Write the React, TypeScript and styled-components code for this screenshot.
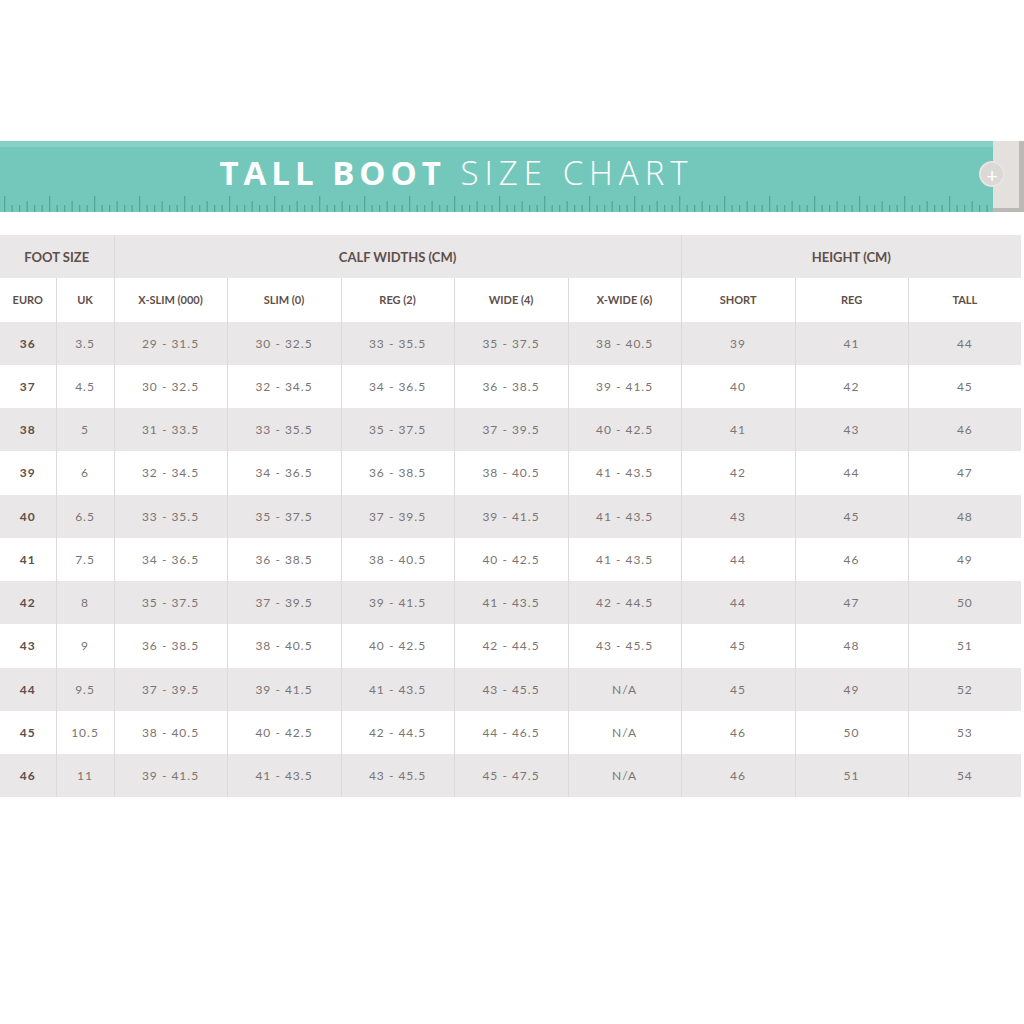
import React from "react";
import styled, { createGlobalStyle } from "styled-components";

const G = createGlobalStyle`
  body { margin: 0; background: #fff; font-family: "Lato", "Open Sans", sans-serif; }
`;
const Page = styled.div`
  width: 1024px; height: 1024px; padding-top: 141px; box-sizing: border-box;
`;
const Banner = styled.div`
  display: flex; height: 71px;
`;
const Strip = styled.div`
  position: relative; flex: 1; background: #74c8bb;
  border-top: 6px solid #86d1c5; box-sizing: border-box;
  display: flex; justify-content: center;
`;
const Title = styled.h1`
  margin: 3px 0 0 -80px; font-size: 33px; color: #fff; letter-spacing: 6px;
  font-weight: 300; font-family: "Open Sans", sans-serif;
  b { font-weight: 700; letter-spacing: 5px; }
`;
const Ticks = styled.svg`
  position: absolute; left: 0; bottom: 0;
`;
const Cap = styled.div`
  width: 26px; background: #e4e0de; border-right: 5px solid #bdb9b6;
  border-bottom: 4px solid #bdb9b6; position: relative;
`;
const Plus = styled.div`
  position: absolute; left: -14px; top: 20px; width: 26px; height: 26px; border-radius: 50%;
  background: #dcd8d6; color: #fff; font-size: 20px; line-height: 24px; text-align: center;
  border: 2px solid #e8e4e2; box-sizing: border-box;
`;
const Table = styled.table`
  margin-top: 23px; width: 1021px; border-collapse: collapse; table-layout: fixed;
  font-family: "Lato", sans-serif;
`;
const Row = styled.tr<{ $grey?: boolean }>`
  height: 43.25px; background: ${p => (p.$grey ? "#e9e7e7" : "#fff")};
`;
const Th = styled.th`
  font-size: 11px; font-weight: 700; color: #5e4f4a; border-left: 1px solid #dcdada;
  &:first-child { border-left: none; }
`;
const TopTh = styled(Th)`font-size: 13px;`;
const Td = styled.td<{ $b?: boolean }>`
  text-align: center; font-size: 12px; letter-spacing: 1px; color: ${p => (p.$b ? "#5e4f4a" : "#7a7574")};
  font-weight: ${p => (p.$b ? 700 : 400)}; border-left: 1px solid #dcdada;
  &:first-child { border-left: none; }
`;

const data = [
  ["36","3.5","29 - 31.5","30 - 32.5","33 - 35.5","35 - 37.5","38 - 40.5","39","41","44"],
  ["37","4.5","30 - 32.5","32 - 34.5","34 - 36.5","36 - 38.5","39 - 41.5","40","42","45"],
  ["38","5","31 - 33.5","33 - 35.5","35 - 37.5","37 - 39.5","40 - 42.5","41","43","46"],
  ["39","6","32 - 34.5","34 - 36.5","36 - 38.5","38 - 40.5","41 - 43.5","42","44","47"],
  ["40","6.5","33 - 35.5","35 - 37.5","37 - 39.5","39 - 41.5","41 - 43.5","43","45","48"],
  ["41","7.5","34 - 36.5","36 - 38.5","38 - 40.5","40 - 42.5","41 - 43.5","44","46","49"],
  ["42","8","35 - 37.5","37 - 39.5","39 - 41.5","41 - 43.5","42 - 44.5","44","47","50"],
  ["43","9","36 - 38.5","38 - 40.5","40 - 42.5","42 - 44.5","43 - 45.5","45","48","51"],
  ["44","9.5","37 - 39.5","39 - 41.5","41 - 43.5","43 - 45.5","N/A","45","49","52"],
  ["45","10.5","38 - 40.5","40 - 42.5","42 - 44.5","44 - 46.5","N/A","46","50","53"],
  ["46","11","39 - 41.5","41 - 43.5","43 - 45.5","45 - 47.5","N/A","46","51","54"],
];
const widths = [56, 58, 113, 114, 113, 114, 113, 114, 113, 113];
const heads = ["EURO","UK","X-SLIM (000)","SLIM (0)","REG (2)","WIDE (4)","X-WIDE (6)","SHORT","REG","TALL"];

export default function App() {
  const ticks = [];
  for (let i = 0; i < 132; i++) {
    const x = 4 + i * 7.5;
    const h = i % 6 === 0 ? 16 : i % 3 === 0 ? 11 : 7;
    ticks.push(<rect key={i} x={x} y={18 - h} width={1.3} height={h} fill="#4fa89a" />);
  }
  return (
    <Page>
      <G />
      <Banner>
        <Strip>
          <Title><b>TALL BOOT</b> SIZE CHART</Title>
          <Ticks width="989" height="18">{ticks}</Ticks>
        </Strip>
        <Cap><Plus>+</Plus></Cap>
      </Banner>
      <Table>
        <colgroup>{widths.map((w, i) => <col key={i} style={{ width: w }} />)}</colgroup>
        <tbody>
          <Row $grey>
            <TopTh colSpan={2}>FOOT SIZE</TopTh>
            <TopTh colSpan={5}>CALF WIDTHS (CM)</TopTh>
            <TopTh colSpan={3}>HEIGHT (CM)</TopTh>
          </Row>
          <Row>
            {heads.map((h, i) => <Th key={i}>{h}</Th>)}
          </Row>
          {data.map((r, i) => (
            <Row key={i} $grey={i % 2 === 0}>
              {r.map((c, j) => <Td key={j} $b={j === 0}>{c}</Td>)}
            </Row>
          ))}
        </tbody>
      </Table>
    </Page>
  );
}
